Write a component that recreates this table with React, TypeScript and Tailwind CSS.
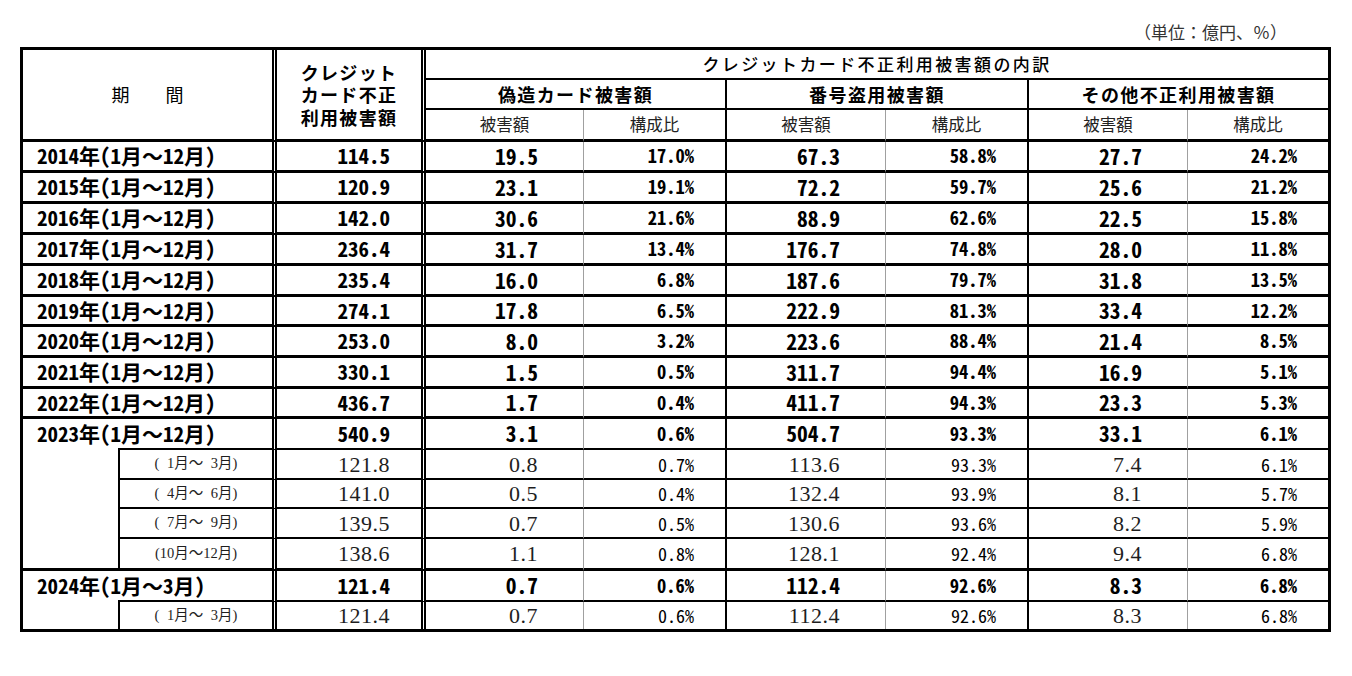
import React from 'react';

// 年次データ: [期間, 総額, 偽造額, 偽造比, 番号盗用額, 番号盗用比, その他額, その他比]
const yearly: string[][] = [
  ['2014年(1月～12月)', '114.5', '19.5', '17.0%', '67.3', '58.8%', '27.7', '24.2%'],
  ['2015年(1月～12月)', '120.9', '23.1', '19.1%', '72.2', '59.7%', '25.6', '21.2%'],
  ['2016年(1月～12月)', '142.0', '30.6', '21.6%', '88.9', '62.6%', '22.5', '15.8%'],
  ['2017年(1月～12月)', '236.4', '31.7', '13.4%', '176.7', '74.8%', '28.0', '11.8%'],
  ['2018年(1月～12月)', '235.4', '16.0', '6.8%', '187.6', '79.7%', '31.8', '13.5%'],
  ['2019年(1月～12月)', '274.1', '17.8', '6.5%', '222.9', '81.3%', '33.4', '12.2%'],
  ['2020年(1月～12月)', '253.0', '8.0', '3.2%', '223.6', '88.4%', '21.4', '8.5%'],
  ['2021年(1月～12月)', '330.1', '1.5', '0.5%', '311.7', '94.4%', '16.9', '5.1%'],
  ['2022年(1月～12月)', '436.7', '1.7', '0.4%', '411.7', '94.3%', '23.3', '5.3%'],
];

const y2023 = ['2023年(1月～12月)', '540.9', '3.1', '0.6%', '504.7', '93.3%', '33.1', '6.1%'];
const q2023: string[][] = [
  ['( 1月～ 3月)', '121.8', '0.8', '0.7%', '113.6', '93.3%', '7.4', '6.1%'],
  ['( 4月～ 6月)', '141.0', '0.5', '0.4%', '132.4', '93.9%', '8.1', '5.7%'],
  ['( 7月～ 9月)', '139.5', '0.7', '0.5%', '130.6', '93.6%', '8.2', '5.9%'],
  ['(10月～12月)', '138.6', '1.1', '0.8%', '128.1', '92.4%', '9.4', '6.8%'],
];
const y2024 = ['2024年(1月～3月)', '121.4', '0.7', '0.6%', '112.4', '92.6%', '8.3', '6.8%'];
const q2024 = ['( 1月～ 3月)', '121.4', '0.7', '0.6%', '112.4', '92.6%', '8.3', '6.8%'];

const gothic = "font-['Noto_Sans_Mono_CJK_JP','Noto_Sans_CJK_JP',monospace]";
const mincho = "font-['Liberation_Serif','Noto_Sans_CJK_JP',serif]";
const sans = "font-['Noto_Sans_CJK_JP',sans-serif]";

// 金額・構成比の7セル
function ValueCells({ v, sub, bottom }: { v: string[]; sub?: boolean; bottom: string }) {
  const big = sub ? `${mincho} text-[22px] tracking-[0.5px] text-[#1e1e1e]` : `${gothic} text-[21.5px] font-bold`;
  const pct = sub ? `${gothic} text-[18px]` : `${gothic} text-[18.5px] font-bold`;
  const total = sub ? `${mincho} text-[22px] tracking-[0.5px] text-[#1e1e1e]` : `${gothic} text-[21px] font-bold`;
  return (
    <>
      <div className={`flex items-center justify-end pr-[31px] border-r-[5px] [border-right-style:double] border-black ${bottom}`}>
        <span className={total}>{v[1]}</span>
      </div>
      {[2, 4, 6].map((i) => (
        <React.Fragment key={i}>
          <div className={`flex items-center justify-end pr-[45px] border-r border-r-[#a0a0a0] border-b-black ${bottom}`}>
            <span className={big}>{v[i]}</span>
          </div>
          <div className={`flex items-center justify-end pr-[31px] border-black ${i < 6 ? 'border-r-2' : ''} ${bottom}`}>
            <span className={pct}>{v[i + 1]}</span>
          </div>
        </React.Fragment>
      ))}
    </>
  );
}

function YearLabel({ text, bottom }: { text: string; bottom: string }) {
  return (
    <div className={`col-span-2 flex items-center pl-[14px] border-r-[5px] [border-right-style:double] border-black ${bottom}`}>
      <span className={`${gothic} text-[21px] font-bold whitespace-nowrap`}>{text}</span>
    </div>
  );
}

function QuarterLabel({ text, bottom }: { text: string; bottom: string }) {
  return (
    <div className={`flex items-center justify-center border-l-2 border-r-[5px] [border-right-style:double] border-black ${bottom}`}>
      <span className={`${mincho} text-[14.5px] text-[#1e1e1e] whitespace-pre [word-spacing:4px]`}>{text}</span>
    </div>
  );
}

export default function App() {
  return (
    <div className="w-[1352px] h-[676px] bg-white text-black pt-[20px] pl-[20px]">
      <div className="w-[1311px]">
        {/* 単位 */}
        <div className={`h-[27px] text-right pr-[44px] text-[17px] leading-[24px] text-[#333] ${sans}`}>
          （単位：億円、％）
        </div>

        <div className="grid grid-cols-[95px_159px_149px_158px_143px_159px_143px_159px_140px] grid-rows-[30px_30px_32px_31px_31px_31px_31px_31px_30px_31px_31px_30px_31px_30px_29px_30px_32px_31px_27px] border-[3px] border-black">
          {/* ヘッダー */}
          <div className={`col-span-2 row-span-3 flex items-center justify-center border-r-[5px] [border-right-style:double] border-b-[3px] border-black ${sans} text-[18px] whitespace-pre`}>
            期　　間
          </div>
          <div className={`row-span-3 flex flex-col items-center justify-center border-r-[5px] [border-right-style:double] border-b-[3px] border-black ${sans} text-[18px] font-bold leading-[22.5px] tracking-[1.3px]`}>
            <span className="leading-[22.5px]">クレジット</span>
            <span className="leading-[22.5px]">カード不正</span>
            <span className="leading-[22.5px]">利用被害額</span>
          </div>
          <div className={`col-span-6 flex items-center justify-center border-b-2 border-black ${sans} text-[17px] font-medium tracking-[2.4px]`}>
            クレジットカード不正利用被害額の内訳
          </div>
          <div className={`col-span-2 flex items-center justify-center border-r-2 border-b-2 border-black ${sans} text-[18px] font-bold tracking-[1.4px]`}>
            偽造カード被害額
          </div>
          <div className={`col-span-2 flex items-center justify-center border-r-2 border-b-2 border-black ${sans} text-[18px] font-bold tracking-[1.4px]`}>
            番号盗用被害額
          </div>
          <div className={`col-span-2 flex items-center justify-center border-b-2 border-black ${sans} text-[18px] font-bold tracking-[1.4px]`}>
            その他不正利用被害額
          </div>
          {[0, 1, 2].map((g) => (
            <React.Fragment key={g}>
              <div className={`flex items-center justify-center border-r border-r-[#a0a0a0] border-b-[3px] border-b-black ${sans} text-[16.5px] text-[#222]`}>
                被害額
              </div>
              <div className={`flex items-center justify-center border-b-[3px] border-black ${g < 2 ? 'border-r-2' : ''} ${sans} text-[16.5px] text-[#222]`}>
                構成比
              </div>
            </React.Fragment>
          ))}

          {/* 年次 */}
          {yearly.map((r) => (
            <React.Fragment key={r[0]}>
              <YearLabel text={r[0]} bottom="border-b-[3px]" />
              <ValueCells v={r} bottom="border-b-[3px]" />
            </React.Fragment>
          ))}

          {/* 2023年と四半期 */}
          <div className="row-span-5 flex items-start pl-[14px] border-b-[3px] border-black">
            <div className="h-[29px] flex items-center">
              <span className={`${gothic} text-[21px] font-bold whitespace-nowrap`}>{y2023[0]}</span>
            </div>
          </div>
          <div className="border-r-[5px] [border-right-style:double] border-b-2 border-black" />
          <ValueCells v={y2023} bottom="border-b-2" />
          {q2023.map((r, i) => (
            <React.Fragment key={r[0]}>
              <QuarterLabel text={r[0]} bottom={i === 3 ? 'border-b-[3px]' : 'border-b-2'} />
              <ValueCells v={r} sub bottom={i === 3 ? 'border-b-[3px]' : 'border-b-2'} />
            </React.Fragment>
          ))}

          {/* 2024年 */}
          <div className="row-span-2 flex items-start pl-[14px] border-black">
            <div className="h-[29px] flex items-center">
              <span className={`${gothic} text-[21px] font-bold whitespace-nowrap`}>{y2024[0]}</span>
            </div>
          </div>
          <div className="border-r-[5px] [border-right-style:double] border-b-2 border-black" />
          <ValueCells v={y2024} bottom="border-b-2" />
          <QuarterLabel text={q2024[0]} bottom="" />
          <ValueCells v={q2024} sub bottom="" />
        </div>
      </div>
    </div>
  );
}
